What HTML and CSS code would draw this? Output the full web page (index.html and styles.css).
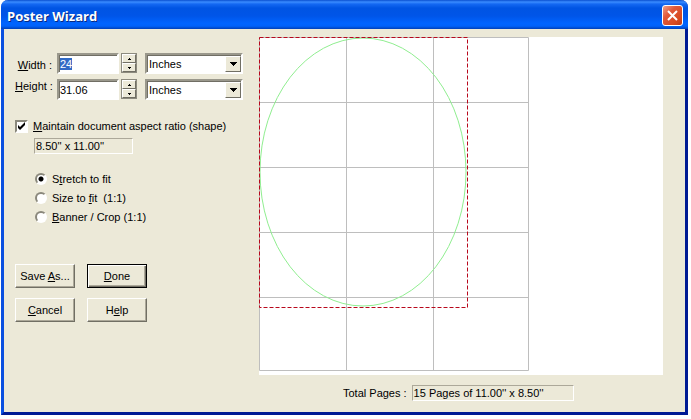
FILE: index.html
```html
<!DOCTYPE html>
<html lang="en">
<head>
<meta charset="utf-8">
<title>Poster Wizard</title>
<link rel="stylesheet" href="styles.css">
</head>
<body>
<main class="window">
  <header class="titlebar">
    <h1>Poster Wizard</h1>
    <button class="close" type="button" aria-label="Close">
      <svg width="11" height="11" viewBox="0 0 11 11"><path d="M1 1L10 10M10 1L1 10" stroke="#fff" stroke-width="2"/></svg>
    </button>
  </header>
  <form class="content">
    <section class="settings">
      <div class="size">
        <div class="labels">
          <label for="width"><u>W</u>idth :</label>
          <label for="height"><u>H</u>eight :</label>
        </div>
        <div class="fields">
          <div class="field-row">
            <input class="number" id="width" type="text" value="24">
            <div class="spinner">
              <button type="button" aria-label="Increase width"><svg width="3" height="2" viewBox="0 0 3 2"><path d="M1 0h1v1h1v1H0V1h1z"/></svg></button>
              <button type="button" aria-label="Decrease width"><svg width="3" height="2" viewBox="0 0 3 2"><path d="M0 0h3v1H2v1H1V1H0z"/></svg></button>
            </div>
            <div class="combo">
              <select aria-label="Width unit"><option>Inches</option></select>
              <span class="arrow"><svg width="7" height="4" viewBox="0 0 7 4"><path d="M0 0h7v1H6v1H5v1H4v1H3V3H2V2H1V1H0z"/></svg></span>
            </div>
          </div>
          <div class="field-row">
            <input class="number" id="height" type="text" value="31.06">
            <div class="spinner">
              <button type="button" aria-label="Increase height"><svg width="3" height="2" viewBox="0 0 3 2"><path d="M1 0h1v1h1v1H0V1h1z"/></svg></button>
              <button type="button" aria-label="Decrease height"><svg width="3" height="2" viewBox="0 0 3 2"><path d="M0 0h3v1H2v1H1V1H0z"/></svg></button>
            </div>
            <div class="combo">
              <select aria-label="Height unit"><option>Inches</option></select>
              <span class="arrow"><svg width="7" height="4" viewBox="0 0 7 4"><path d="M0 0h7v1H6v1H5v1H4v1H3V3H2V2H1V1H0z"/></svg></span>
            </div>
          </div>
        </div>
      </div>

      <label class="check"><input type="checkbox" checked><span><u>M</u>aintain document aspect ratio (shape)</span></label>
      <output class="readout ratio">8.50'' x 11.00''</output>

      <div class="modes">
        <label class="radio"><input type="radio" name="mode" checked><span>S<u>t</u>retch to fit</span></label>
        <label class="radio"><input type="radio" name="mode"><span>Size to <u>f</u>it&nbsp; (1:1)</span></label>
        <label class="radio"><input type="radio" name="mode"><span><u>B</u>anner / Crop (1:1)</span></label>
      </div>

      <div class="actions">
        <button class="push" type="button">Save <u>A</u>s...</button>
        <button class="push default" type="submit"><u>D</u>one</button>
        <button class="push" type="button"><u>C</u>ancel</button>
        <button class="push" type="button">H<u>e</u>lp</button>
      </div>
    </section>

    <section class="preview">
      <div class="canvas">
        <svg width="270" height="334" viewBox="0 0 270 334" fill="none" role="img" aria-label="Page layout preview">
          <path class="grid" d="M.5 .5H269.5V333.5H.5zM87.5 0V334M174.5 0V334M0 65.5H270M0 130.5H270M0 195.5H270M0 260.5H270"/>
          <ellipse class="shape" cx="104" cy="135" rx="103" ry="134"/>
          <rect class="bounds" x=".5" y=".5" width="208" height="270"/>
        </svg>
      </div>
      <div class="total">
        <label for="pages">Total Pages :</label>
        <output class="readout pages" id="pages">15 Pages of 11.00'' x 8.50''</output>
      </div>
    </section>
  </form>
</main>
<script src="script.js"></script>
</body>
</html>
```
FILE: styles.css
```css
* { box-sizing: border-box; }

body {
  margin: 0;
  padding: 0 3px 4px 1px;
  min-height: 100vh;
  display: flex;
  background: #fff;
  color: #000;
  font: 11px/14px "Liberation Sans", Arial, sans-serif;
}

input, select, button {
  font: inherit;
  color: inherit;
  margin: 0;
  border-radius: 0;
}

u { text-underline-offset: 1px; }

.window {
  flex: 1;
  display: flex;
  flex-direction: column;
  background: #ece9d8;
  border: 3px solid;
  border-color: #0054e3 #001a94 #001a94 #0a50e0;
  border-top: 0;
  border-radius: 7px 7px 0 0;
}

.titlebar {
  display: flex;
  align-items: center;
  justify-content: space-between;
  height: 29px;
  margin: 0 -3px;
  padding: 2px 5px 0 6px;
  border-radius: 7px 7px 0 0;
  background: linear-gradient(#0a4fd0 0, #3a8cff 7%, #1468f2 14%, #0054e3 28%, #0055e8 55%, #0064ff 80%, #0062fa 90%, #0040b8 100%);
}

.titlebar h1 {
  margin: 0;
  color: #fff;
  font: bold 13px/18px "Open Sans", sans-serif;
  text-shadow: 1px 1px #0a2a80;
}

.close {
  display: grid;
  place-items: center;
  width: 21px;
  height: 21px;
  padding: 0;
  border: 1px solid #fff;
  border-radius: 3px;
  background: linear-gradient(135deg, #f0a088, #e0583a 35%, #d84a20 75%, #b83a18);
}

.content {
  flex: 1;
  display: flex;
  padding: 8px 22px 10px 11px;
}

.settings { width: 244px; }

.size { display: flex; padding-top: 16px; }

.labels {
  display: flex;
  flex-direction: column;
  gap: 7px;
  padding-top: 5px;
  width: 42px;
  text-align: right;
  padding-right: 5px;
  white-space: nowrap;
}

.fields { display: grid; gap: 5px; }
.field-row { display: flex; }

.number, .combo {
  height: 21px;
  border: 2px solid;
  border-color: #9a988c #fff #fff #9a988c;
  box-shadow: inset 1px 1px #706e64;
  background: #fff;
}

.number {
  width: 62px;
  padding: 0 1px;
  outline: 0;
}

.number::selection { background: #316ac5; color: #fff; }

.spinner {
  display: grid;
  grid-template-rows: 1fr 1fr;
  width: 16px;
  height: 20px;
  margin: 0 8px 0 2px;
  border: 1px solid #8c8a7e;
}

.spinner button, .arrow {
  display: grid;
  place-items: center;
  padding: 0;
  border: 1px solid;
  border-color: #fff #716f64 #716f64 #fff;
  background: #ece9d8;
}

.combo { position: relative; width: 98px; }

.combo select {
  appearance: none;
  width: 100%;
  height: 17px;
  padding: 0 18px 0 2px;
  border: 0;
  background: transparent;
  outline: 0;
}

.arrow {
  position: absolute;
  top: 1px;
  right: 0;
  bottom: 0;
  width: 16px;
  pointer-events: none;
}

.check, .radio { display: flex; align-items: center; width: max-content; }
.check { gap: 5px; margin-top: 19px; }

.check input {
  appearance: none;
  width: 13px;
  height: 13px;
  border: 2px solid;
  border-color: #8a887c #fff #fff #8a887c;
  background: #fff;
}

.check input:checked {
  background: #fff url("data:image/svg+xml,%3Csvg xmlns='http://www.w3.org/2000/svg' viewBox='0 0 9 9'%3E%3Cpath d='M1 3v3l2 2 5-5V0L3 5z'/%3E%3C/svg%3E") center / 9px 9px;
}

.readout {
  display: block;
  height: 16px;
  padding: 0 1px;
  border: 1px solid;
  border-color: #aca899 #fff #fff #aca899;
}

.ratio { width: 99px; margin: 5px 0 0 19px; }

.modes {
  display: grid;
  gap: 5px;
  margin: 18px 0 0 20px;
}

.radio { gap: 5px; }

.radio input {
  appearance: none;
  width: 12px;
  height: 12px;
  border: 2px solid;
  border-color: #8a887c #fff #fff #8a887c;
  border-radius: 50%;
  background: #fff;
}

.radio input:checked { background: radial-gradient(circle, #000 2px, #fff 3px); }

.actions {
  display: grid;
  grid-template-columns: 60px 60px;
  gap: 10px 12px;
  margin-top: 40px;
}

.push {
  height: 24px;
  padding: 0;
  border: 1px solid;
  border-color: #fff #716f64 #716f64 #fff;
  box-shadow: inset -1px -1px #aca899;
  background: #ece9d8;
}

.push.default {
  border-color: #000;
  box-shadow: inset 1px 1px #fff, inset -1px -1px #716f64, inset -2px -2px #aca899;
}

.preview { flex: 1; }

.canvas { height: 338px; background: #fff; }
.canvas svg { display: block; }
.grid { stroke: #bebebe; }
.shape { stroke: #90ee90; }
.bounds { stroke: #b8081c; stroke-dasharray: 4 2; }

.total {
  display: flex;
  gap: 5px;
  align-items: center;
  margin: 10px 0 0 84px;
}

.pages { width: 162px; }
```
FILE: script.js
```js
const width = document.getElementById("width");
width.focus();
width.select();
```
